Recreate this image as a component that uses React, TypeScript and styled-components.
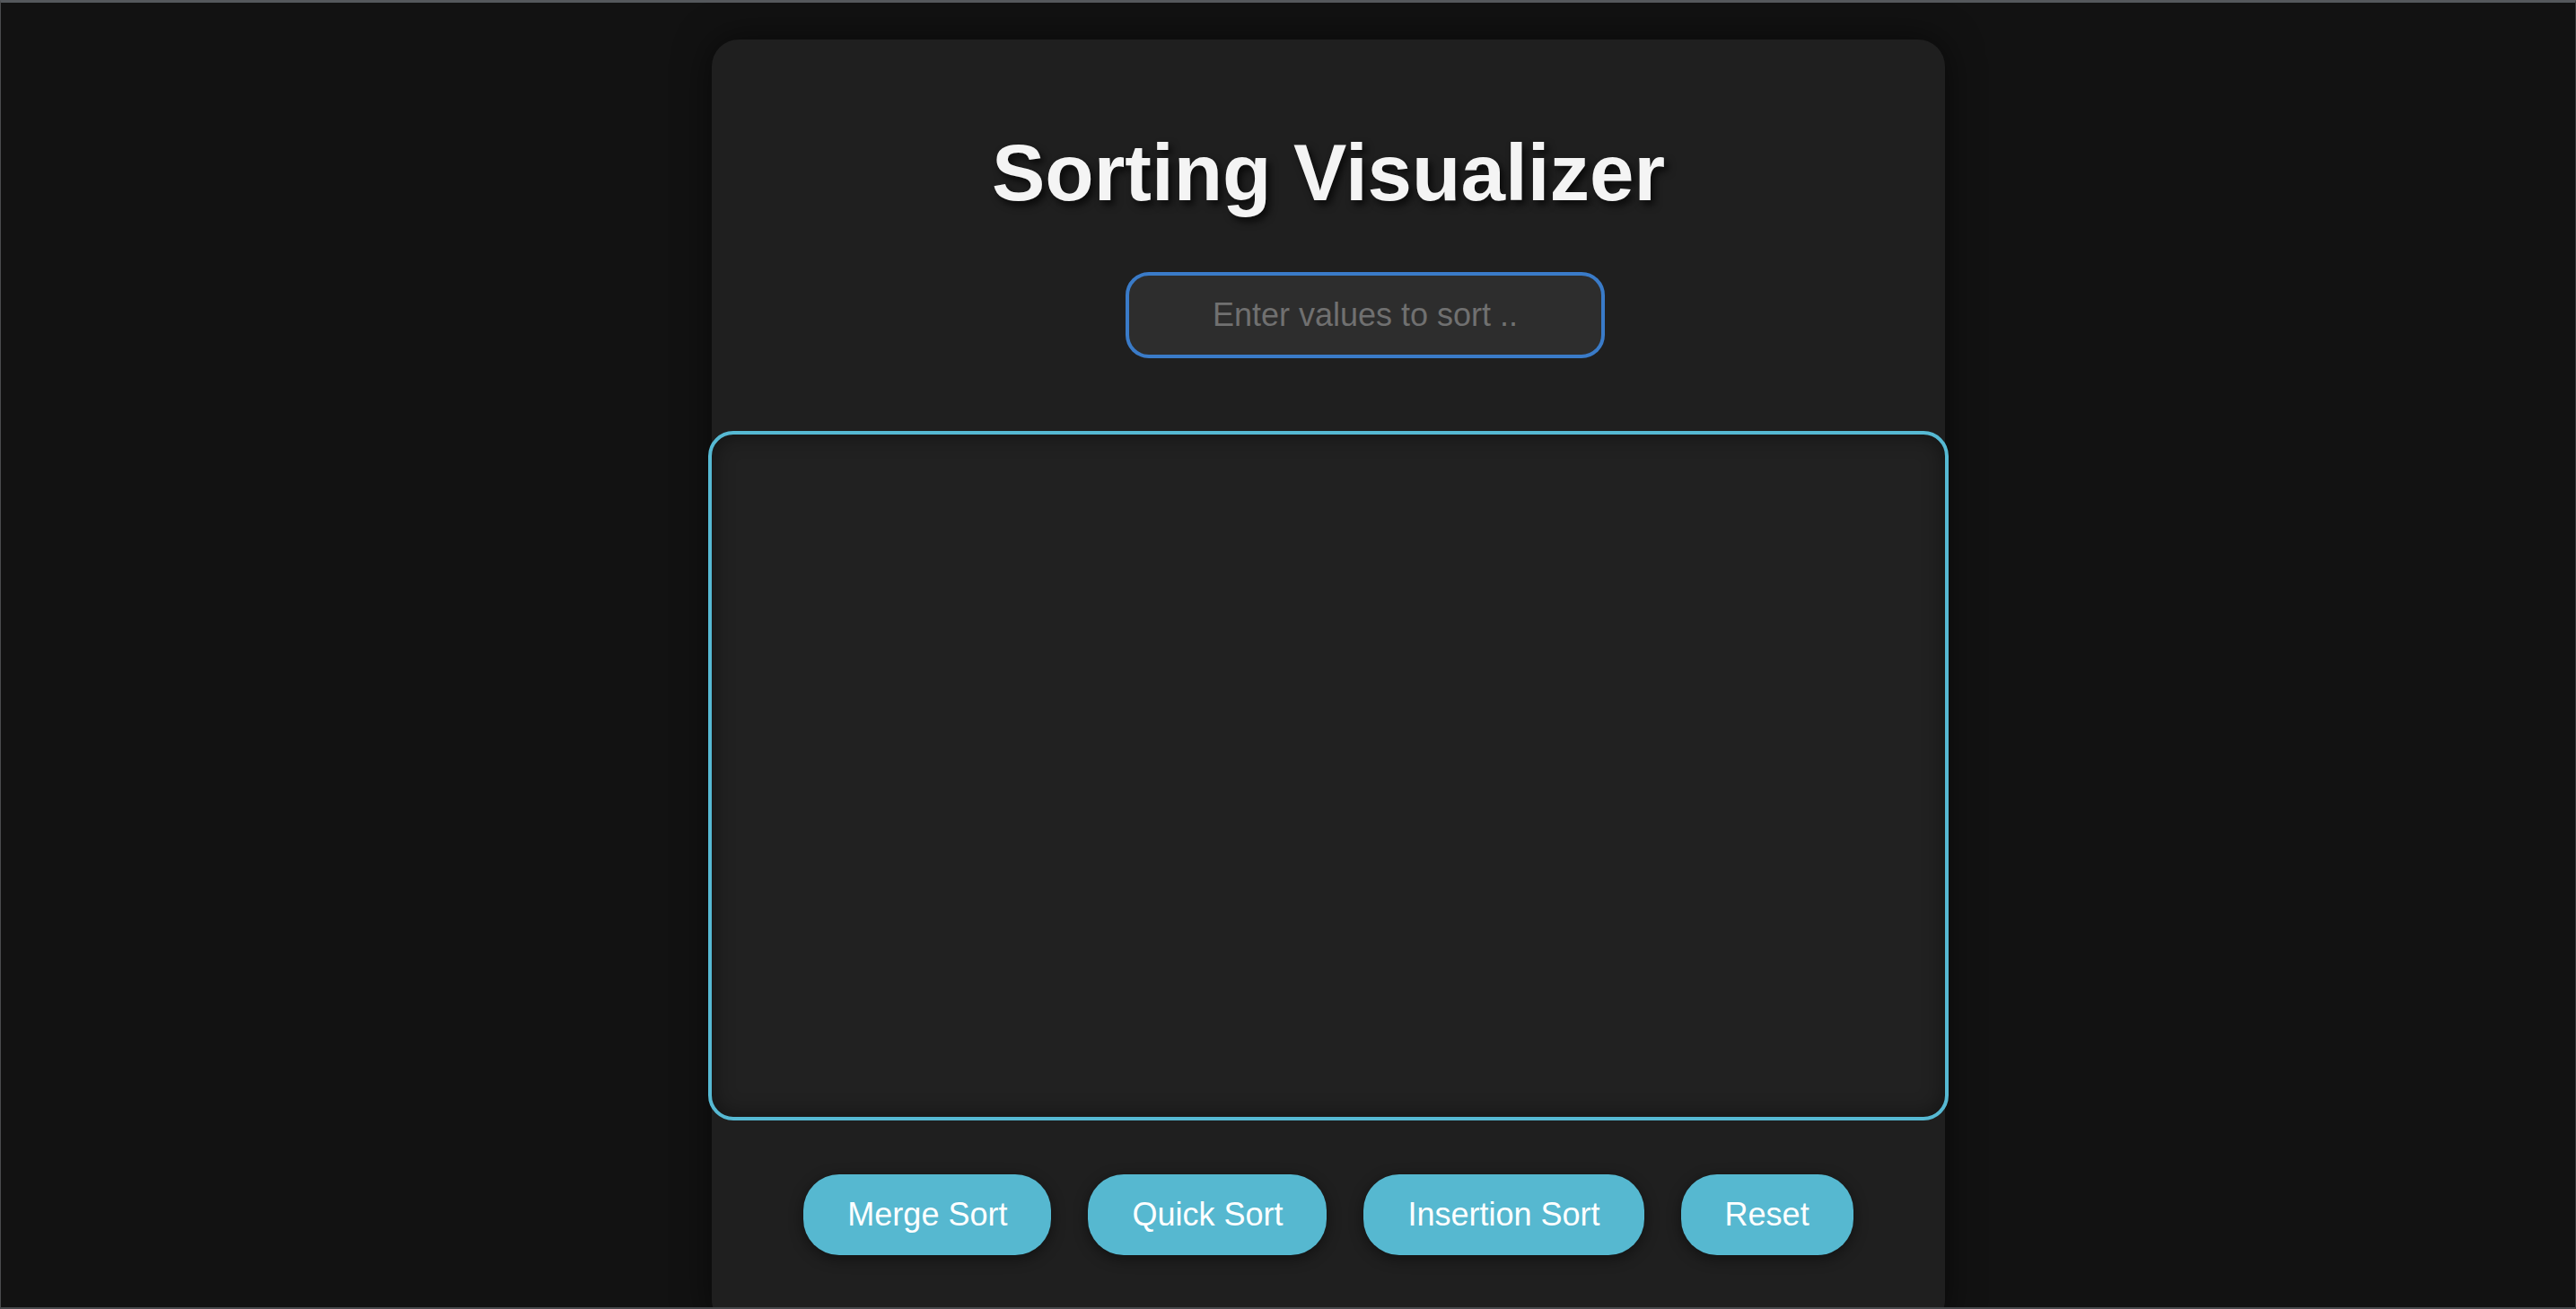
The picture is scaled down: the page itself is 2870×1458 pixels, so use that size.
import React, { FC } from 'react';
import styled, { createGlobalStyle } from 'styled-components';

const GlobalStyle = createGlobalStyle`
  html, body {
    margin: 0;
    padding: 0;
    background: #121212;
    font-family: 'Liberation Sans', Arial, sans-serif;
  }
`;

const Frame = styled.div`
  height: 100vh;
  box-sizing: border-box;
  border-top: 3px solid #55585c;
  border-left: 1px solid #4a4b4d;
  border-right: 1px solid #3a3a3a;
  border-bottom: 2px solid #46484b;
  overflow: hidden;
  display: flex;
  justify-content: center;
  align-items: flex-start;
  padding: 41px 0 0 90px;
`;

const Card = styled.div`
  width: 1374px;
  flex-shrink: 0;
  box-sizing: border-box;
  background: #1f1f1f;
  border-radius: 30px;
  box-shadow: 0 0 40px rgba(0, 0, 0, 0.55);
  padding: 98px 0 80px;
  display: flex;
  flex-direction: column;
  align-items: center;
`;

const Title = styled.h1`
  margin: 0;
  font-size: 89px;
  line-height: 100px;
  font-weight: 700;
  color: #f4f4f4;
  text-shadow: 4px 5px 8px rgba(0, 0, 0, 0.7);
`;

const ValueInput = styled.input`
  margin: 61px 0 0 82px;
  width: 534px;
  height: 96px;
  box-sizing: border-box;
  border: 4px solid #3a7bc8;
  border-radius: 26px;
  background: #2d2d2d;
  color: #eeeeee;
  font-family: inherit;
  font-size: 36px;
  text-align: center;
  outline: none;

  &::placeholder {
    color: #707070;
  }
`;

const Visualizer = styled.div`
  margin-top: 81px;
  width: 1382px;
  height: 768px;
  flex-shrink: 0;
  box-sizing: border-box;
  border: 4px solid #56b9d3;
  border-radius: 28px;
  background: #212121;
  box-shadow: inset 0 0 24px rgba(0, 0, 0, 0.45);
`;

const ButtonRow = styled.div`
  margin-top: 60px;
  display: flex;
  gap: 41px;
`;

const SortButton = styled.button`
  height: 90px;
  padding: 0 49px;
  border: none;
  border-radius: 40px;
  background: #56b8d0;
  color: #ffffff;
  font-family: inherit;
  font-size: 36px;
  box-shadow: 0 4px 16px rgba(0, 0, 0, 0.45);
  cursor: pointer;
`;

const actions = ['Merge Sort', 'Quick Sort', 'Insertion Sort', 'Reset'];

const App: FC = () => {
  return (
    <>
      <GlobalStyle />
      <Frame>
        <Card>
          <Title>Sorting Visualizer</Title>
          <ValueInput placeholder="Enter values to sort .." />
          <Visualizer />
          <ButtonRow>
            {actions.map((label) => (
              <SortButton key={label}>{label}</SortButton>
            ))}
          </ButtonRow>
        </Card>
      </Frame>
    </>
  );
};

export default App;
